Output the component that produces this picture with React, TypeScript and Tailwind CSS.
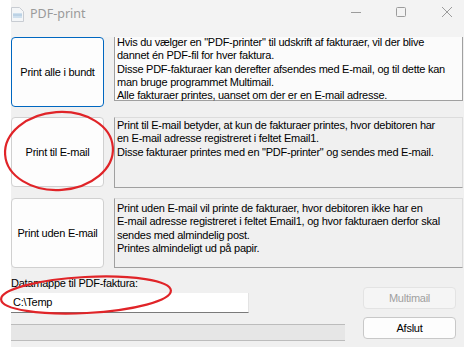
import React from "react"

const font = { fontFamily: '"Liberation Sans", Arial, sans-serif' }

const boxes = [
  {
    label: "Print alle i bundt",
    focused: true,
    text: [
      'Hvis du vælger en "PDF-printer" til udskrift af fakturaer, vil der blive',
      "dannet én PDF-fil for hver faktura.",
      "Disse PDF-fakturaer kan derefter afsendes med E-mail, og til dette kan",
      "man bruge programmet Multimail.",
      "Alle fakturaer printes, uanset om der er en E-mail adresse.",
    ],
  },
  {
    label: "Print til E-mail",
    focused: false,
    text: [
      "Print til E-mail betyder, at kun de fakturaer printes, hvor debitoren har",
      "en E-mail adresse registreret i feltet Email1.",
      'Disse fakturaer printes med en "PDF-printer" og sendes med E-mail.',
    ],
  },
  {
    label: "Print uden E-mail",
    focused: false,
    text: [
      "Print uden E-mail vil printe de fakturaer, hvor debitoren ikke har en",
      "E-mail adresse registreret i feltet Email1, og hvor fakturaen derfor skal",
      "sendes med almindelig post.",
      "Printes almindeligt ud på papir.",
    ],
  },
]

function TitleBar() {
  return (
    <div className="h-[37px] flex items-center bg-[#f3f3f3] relative">
      {/* app icon */}
      <svg width="13" height="15" viewBox="0 0 13 15" className="mt-[-8px]">
        <path d="M0.5 0.5h8l4 4v10h-12z" fill="#f4f6f8" stroke="#c8ccd2" />
        <rect x="2" y="6" width="9" height="5" fill="#cfe0ee" />
        <rect x="2" y="7.5" width="9" height="1" fill="#a9c4dc" />
      </svg>
      <span
        className="ml-[6px] mt-[-8px] text-[12.5px] text-[#9a9a9a]"
        style={{ fontFamily: '"Noto Sans", "Open Sans", sans-serif' }}
      >
        PDF-print
      </span>
      <div className="ml-auto mt-[-13px] flex items-center">
        <svg width="12" height="12" viewBox="0 0 12 12" className="mr-[33px]">
          <path d="M1 6.5h10" stroke="#9c9c9c" strokeWidth="1" />
        </svg>
        <svg width="12" height="12" viewBox="0 0 12 12" className="mr-[34px]">
          <rect x="1.5" y="1.5" width="9" height="9" rx="1" fill="none" stroke="#9c9c9c" />
        </svg>
        <svg width="12" height="12" viewBox="0 0 12 12" className="mr-[11px]">
          <path d="M1 1l10 10M11 1L1 11" stroke="#9c9c9c" strokeWidth="1" />
        </svg>
      </div>
    </div>
  )
}

function Row({ label, focused, text, idx }: { label: string; focused: boolean; text: string[]; idx: number }) {
  const boxCls =
    idx === 0
      ? "h-[66px] mt-[-2px] bg-[#fbfbfb] border border-[#a0a0a0]"
      : idx === 1
        ? "h-[71px] bg-[#f0f0f0] border border-[#dcdcdc] border-l-[#a0a0a0] border-b-[#a0a0a0] pt-[1px]"
        : "h-[70px] bg-[#f0f0f0] border border-[#dcdcdc] border-l-[#a0a0a0] border-b-[#a0a0a0] pt-[3px]"
  return (
    <div className="flex items-start gap-[10px]">
      <button
        className={`w-[93px] h-[70px] shrink-0 rounded-[4px] bg-[#fdfdfd] text-[11px] tracking-[-0.25px] text-black border ${
          focused ? "border-[#0067c0]" : "border-[#d0d0d0]"
        }`}
      >
        {label}
      </button>
      <div className={`w-[349px] pl-[2px] text-[11px] leading-[13.3px] tracking-[-0.25px] text-black ${boxCls}`}>
        {text.map((t) => (
          <div key={t} className="whitespace-nowrap">
            {t}
          </div>
        ))}
      </div>
    </div>
  )
}

export default function App() {
  return (
    <div className="relative w-[464px] h-[347px] overflow-hidden bg-white flex" style={font}>
      <div className="w-[11px] shrink-0 bg-white" />
      <div className="flex-1 bg-[#f0f0f0] flex flex-col">
        <TitleBar />
        <div className="flex flex-col gap-[10px]">
          {boxes.map((b, i) => (
            <Row key={b.label} idx={i} {...b} />
          ))}
        </div>
        <div className="flex items-start mt-[4px]">
          <div className="flex flex-col">
            <span className="text-[11px] leading-[13px] tracking-[-0.25px] text-black mt-[5px]">
              Datamappe til PDF-faktura:
            </span>
            <div className="w-[238px] h-[20px] mt-[3px] bg-white border-b border-[#7a7a7a] border-r border-r-[#e3e3e3] text-[11px] tracking-[-0.25px] flex items-center pl-[2px]">
              C:\Temp
            </div>
          </div>
          <button className="ml-auto mt-[15px] mr-[8px] w-[93px] h-[22px] rounded-[4px] bg-[#f5f5f5] border border-[#e3e3e3] text-[11px] tracking-[-0.25px] text-[#a0a0a0]">
            Multimail
          </button>
        </div>
        <div className="flex items-start mt-[4px]">
          <div className="w-[334px] h-[17px] mt-[7px] bg-[#e6e6e6] border-y border-[#bcbcbc]" />
          <button className="ml-auto mr-[8px] w-[93px] h-[22px] rounded-[4px] bg-[#fdfdfd] border border-[#c8c8c8] text-[11px] tracking-[-0.25px] text-black">
            Afslut
          </button>
        </div>
      </div>

      {/* red annotation circles */}
      <svg className="absolute inset-0 pointer-events-none" width="464" height="347" viewBox="0 0 464 347">
        <ellipse cx="59" cy="151" rx="54" ry="39" fill="none" stroke="#e02428" strokeWidth="2.2" transform="rotate(-4 59 151)" />
        <ellipse cx="86" cy="295" rx="85" ry="18" fill="none" stroke="#e02428" strokeWidth="2.2" transform="rotate(-3 86 295)" />
      </svg>
    </div>
  )
}
